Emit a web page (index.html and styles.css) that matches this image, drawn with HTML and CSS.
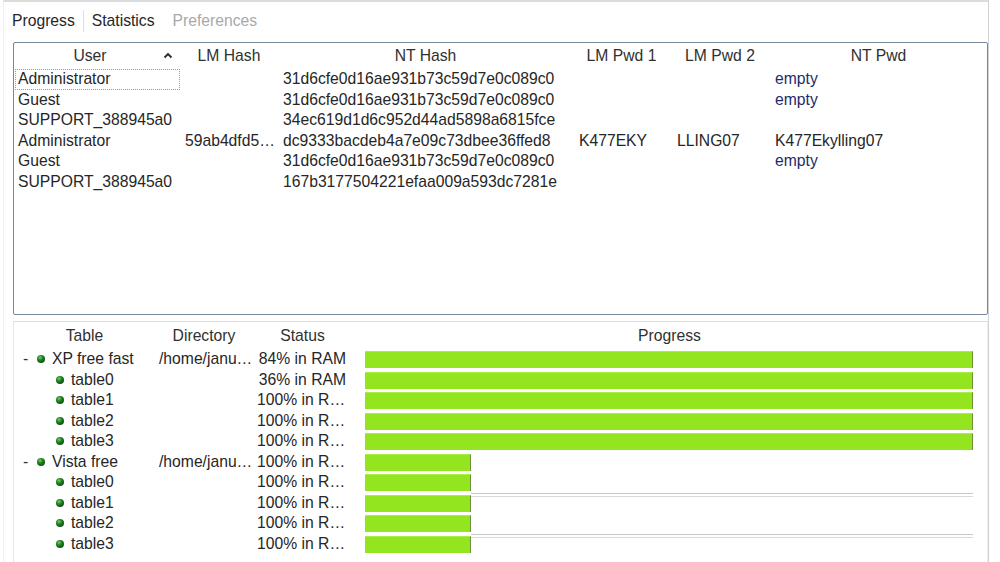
FILE: index.html
```html
<!DOCTYPE html>
<html>
<head>
<meta charset="utf-8">
<link rel="stylesheet" href="styles.css">
</head>
<body>
<div class="window">
  <div class="tabs">
    <span class="tab first">Progress</span>
    <span class="tab">Statistics</span>
    <span class="tab disabled">Preferences</span>
  </div>

  <div class="panel hashes">
    <div class="hrow head">
      <div class="hc user-head"><span class="uh">User</span><svg class="caret" width="10" height="7" viewBox="0 0 10 7"><path d="M1.5 5.5 L5 2 L8.5 5.5" fill="none" stroke="#2a2a2a" stroke-width="1.8"/></svg></div>
      <div class="hc">LM Hash</div>
      <div class="hc">NT Hash</div>
      <div class="hc">LM Pwd 1</div>
      <div class="hc">LM Pwd 2</div>
      <div class="hc">NT Pwd</div>
    </div>
    <div class="hrow">
      <div class="c focus">Administrator</div><div class="c"></div><div class="c">31d6cfe0d16ae931b73c59d7e0c089c0</div><div class="c"></div><div class="c"></div><div class="c empty">empty</div>
    </div>
    <div class="hrow">
      <div class="c">Guest</div><div class="c"></div><div class="c">31d6cfe0d16ae931b73c59d7e0c089c0</div><div class="c"></div><div class="c"></div><div class="c empty">empty</div>
    </div>
    <div class="hrow">
      <div class="c">SUPPORT_388945a0</div><div class="c"></div><div class="c">34ec619d1d6c952d44ad5898a6815fce</div><div class="c"></div><div class="c"></div><div class="c"></div>
    </div>
    <div class="hrow">
      <div class="c">Administrator</div><div class="c">59ab4dfd5…</div><div class="c">dc9333bacdeb4a7e09c73dbee36ffed8</div><div class="c">K477EKY</div><div class="c">LLING07</div><div class="c">K477Ekylling07</div>
    </div>
    <div class="hrow">
      <div class="c">Guest</div><div class="c"></div><div class="c">31d6cfe0d16ae931b73c59d7e0c089c0</div><div class="c"></div><div class="c"></div><div class="c empty">empty</div>
    </div>
    <div class="hrow">
      <div class="c">SUPPORT_388945a0</div><div class="c"></div><div class="c">167b3177504221efaa009a593dc7281e</div><div class="c"></div><div class="c"></div><div class="c"></div>
    </div>
  </div>

  <div class="panel tables">
    <div class="trow head">
      <div class="hc">Table</div>
      <div class="hc">Directory</div>
      <div class="hc">Status</div>
      <div class="hc">Progress</div>
    </div>

    <div class="trow">
      <div class="c tree parent"><span class="dash">-</span><span class="dot"></span>XP free fast</div>
      <div class="c">/home/janu…</div>
      <div class="c status ram">84% in RAM</div>
      <div class="c prog"><div class="bar"><div class="fill" style="width:100%"></div><div class="rest"></div></div></div>
    </div>
    <div class="trow">
      <div class="c tree child"><span class="dot"></span>table0</div>
      <div class="c"></div>
      <div class="c status ram">36% in RAM</div>
      <div class="c prog"><div class="bar"><div class="fill" style="width:100%"></div><div class="rest"></div></div></div>
    </div>
    <div class="trow">
      <div class="c tree child"><span class="dot"></span>table1</div>
      <div class="c"></div>
      <div class="c status">100% in R…</div>
      <div class="c prog"><div class="bar"><div class="fill" style="width:100%"></div><div class="rest"></div></div></div>
    </div>
    <div class="trow">
      <div class="c tree child"><span class="dot"></span>table2</div>
      <div class="c"></div>
      <div class="c status">100% in R…</div>
      <div class="c prog"><div class="bar"><div class="fill" style="width:100%"></div><div class="rest"></div></div></div>
    </div>
    <div class="trow">
      <div class="c tree child"><span class="dot"></span>table3</div>
      <div class="c"></div>
      <div class="c status">100% in R…</div>
      <div class="c prog"><div class="bar"><div class="fill" style="width:100%"></div><div class="rest"></div></div></div>
    </div>

    <div class="trow">
      <div class="c tree parent"><span class="dash">-</span><span class="dot"></span>Vista free</div>
      <div class="c">/home/janu…</div>
      <div class="c status">100% in R…</div>
      <div class="c prog"><div class="bar"><div class="fill" style="width:17.4%"></div><div class="rest"></div></div></div>
    </div>
    <div class="trow">
      <div class="c tree child"><span class="dot"></span>table0</div>
      <div class="c"></div>
      <div class="c status">100% in R…</div>
      <div class="c prog"><div class="bar"><div class="fill" style="width:17.4%"></div><div class="rest"></div></div></div>
    </div>
    <div class="trow">
      <div class="c tree child"><span class="dot"></span>table1</div>
      <div class="c"></div>
      <div class="c status">100% in R…</div>
      <div class="c prog"><div class="bar"><div class="fill" style="width:17.4%"></div><div class="rest lined"></div></div></div>
    </div>
    <div class="trow">
      <div class="c tree child"><span class="dot"></span>table2</div>
      <div class="c"></div>
      <div class="c status">100% in R…</div>
      <div class="c prog"><div class="bar"><div class="fill" style="width:17.4%"></div><div class="rest"></div></div></div>
    </div>
    <div class="trow">
      <div class="c tree child"><span class="dot"></span>table3</div>
      <div class="c"></div>
      <div class="c status">100% in R…</div>
      <div class="c prog"><div class="bar"><div class="fill" style="width:17.4%"></div><div class="rest lined"></div></div></div>
    </div>
  </div>
</div>
</body>
</html>
```

FILE: styles.css
```css
html, body {
  margin: 0;
  padding: 0;
  background: #ffffff;
}

body {
  font-family: "Liberation Sans", Arial, sans-serif;
  font-size: 15.7px;
  color: #262626;
  overflow: hidden;
}

.window {
  margin-left: 3px;
  width: 986px;
  height: 562px;
  border-top: 2px solid #dcdcdc;
  border-left: 1px solid #f0f0f0;
  border-right: 1px solid #d2d2d2;
  box-sizing: border-box;
}

.tabs {
  display: flex;
  align-items: center;
  padding: 8px 0 0 8px;
  height: 22px;
  line-height: 22px;
  margin-bottom: 10px;
}

.tab {
  color: #262626;
}

.tab.first {
  padding-right: 8px;
  border-right: 1px solid #dedede;
  margin-right: 8px;
}

.tab.disabled {
  color: #a9a9a9;
  margin-left: 18px;
}

.panel {
  margin-left: 9px;
  width: 975px;
  box-sizing: border-box;
}

.hashes {
  height: 273px;
  border: 1px solid #76889c;
  border-radius: 2px;
}

.hrow {
  display: grid;
  grid-template-columns: 166px 98px 295px 97px 100px 1fr;
  height: 20.5px;
  line-height: 20.5px;
}

.hrow.head {
  height: 26px;
  line-height: 26px;
}

.hc {
  text-align: center;
  color: #303030;
  white-space: nowrap;
}

.user-head {
  position: relative;
}

.uh {
  margin-right: 14px;
}

.caret {
  position: absolute;
  left: 149px;
  top: 9px;
}

.c {
  padding-left: 4px;
  white-space: nowrap;
  overflow: hidden;
  box-sizing: border-box;
}

.focus {
  outline: 1px dotted #9a9a9a;
  outline-offset: -1px;
  margin-left: 1px;
  padding-left: 3px;
}

.hashes .hrow .c:nth-child(2) {
  padding-left: 5px;
}

.hashes .hrow .c:nth-child(3) {
  padding-left: 5px;
}

.hashes .hrow .c:nth-child(4) {
  padding-left: 6px;
}

.hashes .hrow .c:nth-child(5) {
  padding-left: 7px;
}

.hashes .hrow .c:nth-child(6) {
  padding-left: 5px;
}

.empty {
  color: #1d2b6b;
}

.tables {
  height: 250px;
  margin-top: 6px;
  border-top: 1px solid #dedede;
  border-left: 1px solid #e6e6e6;
  border-right: 1px solid #ececec;
}

.trow {
  display: grid;
  grid-template-columns: 141px 98px 99px 1fr;
  height: 20.5px;
  line-height: 20.5px;
}

.trow.head {
  height: 27px;
  line-height: 27px;
}

.tree {
  display: flex;
  align-items: center;
}

.tree.parent {
  padding-left: 9px;
}

.tree.child {
  padding-left: 42px;
}

.dash {
  width: 14px;
  color: #333;
}

.dot {
  width: 8px;
  height: 8px;
  border-radius: 50%;
  background: radial-gradient(circle at 38% 32%, #7ed36a 0, #2a8a2a 30%, #0f5c10 65%, #053a05 100%);
  margin-right: 7px;
  flex: none;
}

.status {
  padding-left: 4px;
  text-overflow: clip;
}

.status.ram {
  text-align: right;
  padding-right: 6px;
}

.prog {
  padding: 0 14px 0 13px;
  overflow: visible;
}

.bar {
  display: flex;
  align-items: flex-start;
  margin-top: 2px;
  height: 17px;
}

.fill {
  height: 17px;
  background: #93e61f;
  border-top: 1px solid #a8ee45;
  border-right: 1px solid #6f8f3a;
  box-sizing: border-box;
  flex: none;
}

.rest {
  flex: 1;
}

.rest.lined {
  margin-top: -2px;
  height: 5px;
  background: linear-gradient(#c9c9c9 0 1px, transparent 1px 3px, #dadada 3px 4px, transparent 4px);
}
```
